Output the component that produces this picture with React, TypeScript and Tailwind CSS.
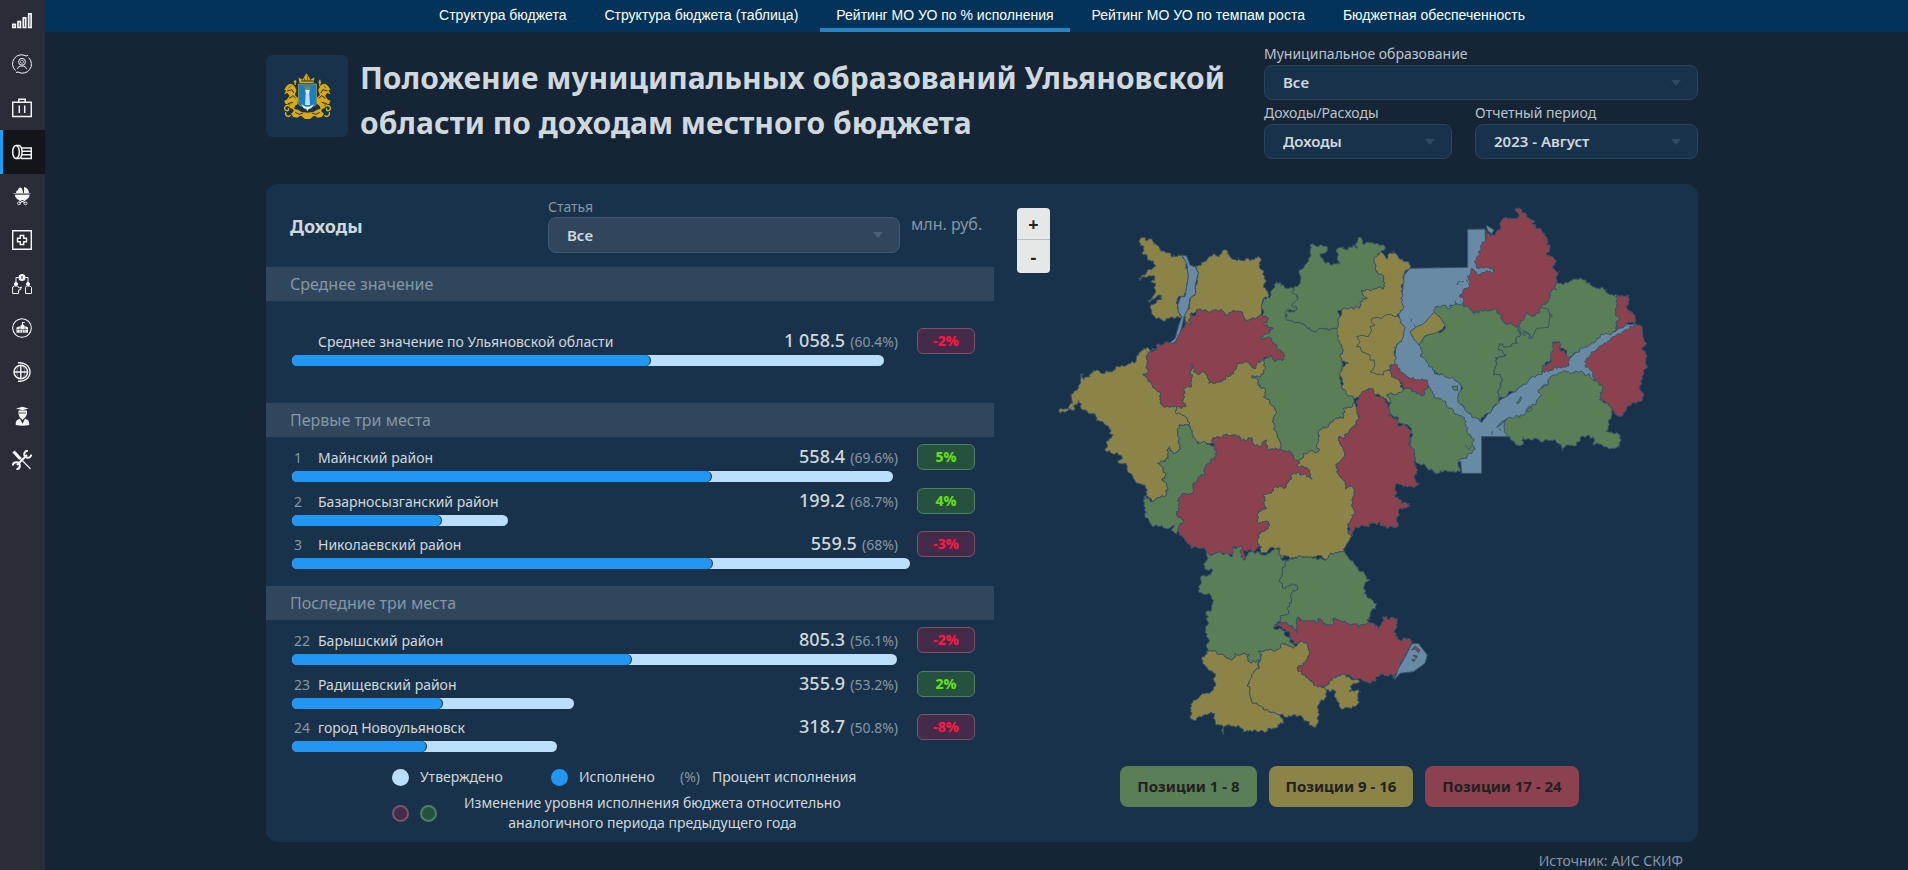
import React from "react";

type Point = [number, number];

type Row = {
  place?: number;
  name: string;
  value: string;
  percent: number;
  total: number;
  change: number;
};

const tabs = [
  "Структура бюджета",
  "Структура бюджета (таблица)",
  "Рейтинг МО УО по % исполнения",
  "Рейтинг МО УО по темпам роста",
  "Бюджетная обеспеченность",
];
const activeTab = 2;

const average: Row = {
  name: "Среднее значение по Ульяновской области",
  value: "1 058.5",
  percent: 60.4,
  total: 95.8,
  change: -2,
};

const firstPlaces: Row[] = [
  { place: 1, name: "Майнский район", value: "558.4", percent: 69.6, total: 97.3, change: 5 },
  { place: 2, name: "Базарносызганский район", value: "199.2", percent: 68.7, total: 35, change: 4 },
  { place: 3, name: "Николаевский район", value: "559.5", percent: 68, total: 100, change: -3 },
];

const lastPlaces: Row[] = [
  { place: 22, name: "Барышский район", value: "805.3", percent: 56.1, total: 97.9, change: -2 },
  { place: 23, name: "Радищевский район", value: "355.9", percent: 53.2, total: 45.6, change: 2 },
  { place: 24, name: "город Новоульяновск", value: "318.7", percent: 50.8, total: 42.8, change: -8 },
];

const GREEN = "#5a7f57";
const OLIVE = "#8b8446";
const RED = "#8b414e";
const WATER = "#688aa5";

// dx/dy move a group of districts, points are "x,y x,y ..."
type District = { fill: string; points: string; dx?: number; dy?: number; smooth?: boolean };

const E = { dx: 930, dy: 0 };
const S = { dx: 120, dy: 810 };

const districts: District[] = [
  // west
  { fill: OLIVE, points: "387,155 402,142 415,148 440,165 484,200 515,195 527,205 533,240 535,270 530,300 525,320 512,320 503,350 508,370 518,383 435,383 425,365 423,345 440,338 455,328 448,322 455,318 435,325 410,330 437,305 437,280 422,275 435,270 435,262 425,258 390,272 387,265 437,228 430,212 395,190 402,170" },
  { fill: OLIVE, points: "555,228 575,215 600,198 635,192 640,180 652,182 658,197 682,212 685,203 690,210 705,212 712,205 720,212 735,203 752,205 758,240 777,318 757,330 757,375 720,388 705,390 685,362 645,378 632,358 600,366 570,356 560,368 540,372 545,400 525,390 523,375 537,350 540,325 555,308 555,290 565,248" },
  { fill: WATER, smooth: true, points: "515,195 530,198 540,225 555,230 565,248 555,290 557,310 540,325 535,355 522,380 517,405 508,440 495,458 475,462 495,445 505,410 515,380 505,365 503,345 512,320 525,320 530,290 535,260 530,220" },
  { fill: OLIVE, points: "440,475 400,475 380,500 378,515 335,525 300,545 270,548 260,540 240,560 222,570 215,562 222,552 212,552 212,580 183,612 187,640 178,655 145,660 150,670 175,660 195,655 190,648 205,632 213,655 255,672 270,695 297,710 297,730 310,735 298,745 290,785 322,788 335,798 325,820 350,822 360,850 375,872 400,885 415,920 427,935 470,910 470,880 455,870 468,855 442,820 475,805 478,770 490,790 505,785 507,705 533,705 533,688 500,672 495,648 453,643 445,605 415,575 398,553 415,540 410,505 420,485" },
  { fill: OLIVE, points: "545,520 550,545 595,555 597,580 640,568 680,530 705,515 735,537 742,515 762,508 760,552 725,558 745,570 765,595 760,620 780,635 800,670 790,690 800,730 812,762 803,780 775,780 770,750 750,770 735,768 725,742 692,752 688,738 650,732 615,745 607,760 565,755 548,742 545,720 533,705 533,688 500,672 495,648 527,650 520,640 530,590 545,585" },
  { fill: RED, points: "540,372 548,378 570,356 600,366 632,358 645,378 685,362 705,390 720,388 757,375 775,385 760,405 790,415 775,430 752,443 785,445 800,465 822,490 822,508 800,510 780,497 740,520 735,537 705,515 680,530 640,568 597,580 595,555 550,545 545,520 545,585 530,590 520,640 527,650 495,648 453,643 445,605 415,575 398,553 415,540 410,505 420,485 440,480 443,462 475,458 495,460 508,430 523,395 545,400" },
  { fill: GREEN, points: "783,318 790,295 800,275 830,295 852,295 860,320 862,355 830,365 830,390 880,402 918,425 940,415 985,420 990,460 995,515 995,590 1008,610 1040,622 1030,640 1000,655 1000,685 940,710 925,730 925,785 880,790 878,805 865,812 845,790 803,780 812,762 800,730 790,690 800,670 780,635 760,620 765,595 745,570 725,558 760,552 762,508 780,497 800,510 822,508 822,490 800,465 785,445 752,443 775,430 790,415 760,405 775,385 757,375 753,350 760,325" },
  { fill: GREEN, points: "905,162 948,167 950,185 930,190 945,220 990,222 980,185 990,172 1005,178 1035,165 1042,175 1050,142 1056,160 1080,158 1115,165 1125,170 1112,187 1092,215 1095,240 1120,265 1125,280 1120,297 1055,300 1072,325 1050,335 1048,355 995,358 985,370 985,420 940,415 918,425 880,402 830,390 825,368 862,355 845,345 860,330 852,295 872,270 868,240 890,220 900,190" },
  { fill: GREEN, points: "507,705 533,705 545,720 548,742 565,762 615,765 615,800 590,825 585,850 550,880 552,903 505,925 508,950 498,965 523,995 505,1015 500,1032 490,1025 492,1005 465,1015 440,1003 425,1007 405,975 403,918 427,935 470,910 470,880 455,870 468,855 442,820 475,805 478,770 490,790 505,785" },
  // centre
  { fill: OLIVE, points: "1038,640 1030,640 1000,655 1000,685 940,710 925,730 925,785 880,790 878,805 865,812 862,825 898,840 905,868 850,850 820,895 790,895 758,918 770,955 745,965 745,1000 775,995 775,1015 750,1030 742,1055 755,1070 745,1090 810,1075 812,1105 890,1100 950,1108 995,1085 1002,1094 1000,1078 1020,1045 1013,1005 1032,960 1030,890 1007,897 985,840 985,820 1005,790 992,740 1015,730 1048,685" },
  { fill: RED, points: "607,760 615,745 650,732 688,738 692,752 725,742 735,768 750,770 770,750 775,780 803,780 845,790 865,812 862,825 898,840 905,868 850,850 820,895 790,895 758,918 770,955 745,965 745,1000 775,995 775,1015 750,1030 742,1055 755,1070 730,1085 700,1080 703,1108 695,1100 690,1068 668,1070 675,1100 635,1090 588,1092 585,1078 545,1075 505,1025 505,1015 523,995 498,965 508,950 505,925 552,903 550,880 585,850 590,825 615,800 615,765" },
  // east
  { ...E, fill: WATER, smooth: true, points: "270,235 443,232 443,118 495,117 497,150 520,180 530,240 528,350 528,400 345,380 330,500 345,552 380,553 385,548 398,542 400,546 390,555 415,570 424,590 420,620 485,697 505,670 540,630 590,600 635,560 680,535 745,510 780,475 850,430 885,425 905,405 950,402 925,440 850,500 820,545 838,578 800,560 745,560 720,620 600,700 560,740 485,740 485,850 425,850 422,815 415,815 350,700 320,600 270,575 240,555 222,520 228,470 245,440 236,370 247,310 252,255" },
  { ...E, fill: OLIVE, points: "182,185 200,208 220,182 235,203 258,215 270,235 252,255 247,310 238,370 250,440 230,465 228,500 225,520 205,540 215,560 240,575 255,605 232,612 200,615 215,635 212,650 200,630 165,615 155,600 145,597 110,622 78,610 65,590 65,530 85,520 65,515 60,460 50,430 55,385 65,360 118,355 120,335 142,325 125,300 190,297 195,280 190,265 165,240 162,215" },
  { ...E, fill: RED, points: "205,540 225,520 240,548 270,565 300,572 322,570 325,585 310,600 308,618 285,605 255,595 240,575 215,560" },
  { ...E, fill: RED, points: "585,60 602,57 620,80 645,95 635,100 675,130 680,165 692,170 680,188 702,205 698,235 718,245 710,275 710,300 695,305 685,330 640,378 620,368 597,412 560,403 528,355 485,362 465,368 430,350 432,330 418,320 448,290 442,260 455,235 472,255 500,242 525,242 505,232 470,235 462,215 478,182 495,155 497,120 512,138 540,120 543,95 560,82 585,85 598,75" },
  { ...E, fill: GREEN, points: "345,355 380,352 400,346 430,350 465,368 485,362 528,355 560,403 597,412 600,430 587,445 593,460 565,470 540,460 540,480 560,495 525,503 520,555 542,560 535,630 505,670 485,697 465,683 445,670 418,640 412,625 424,600 418,580 395,562 345,552 302,500 297,465 310,437 360,430 375,405 345,367" },
  { ...E, fill: OLIVE, smooth: true, points: "342,367 360,382 375,405 368,418 345,430 315,437 297,465 280,445 270,425 290,410 310,402" },
  { ...E, fill: GREEN, points: "710,275 760,267 790,270 825,292 860,297 865,312 888,312 892,340 887,360 897,390 885,425 845,432 830,445 780,475 745,510 735,480 715,455 700,455 700,485 680,515 665,545 635,560 590,600 535,630 542,560 520,555 525,503 560,495 540,480 540,460 565,470 593,460 587,445 600,430 597,412 620,368 640,378 685,330 695,305 710,300" },
  { ...E, fill: RED, points: "700,458 717,453 718,475 735,485 745,515 740,528 700,530 685,545 665,547 668,525 692,510 700,480" },
  { ...E, fill: RED, points: "892,315 925,315 928,370 945,375 943,402 920,402 885,415 897,390 887,360 892,340" },
  { ...E, fill: RED, points: "960,405 980,460 970,470 978,510 965,560 970,610 960,635 925,645 905,678 880,660 838,630 850,590 835,578 820,548 795,530 793,515 820,485 850,465 885,440 915,420 930,408" },
  { ...E, fill: GREEN, points: "690,565 700,555 745,545 780,545 835,578 850,590 838,630 875,655 857,725 900,735 900,773 820,765 818,742 805,735 780,745 770,765 745,765 727,783 722,762 655,748 610,740 605,765 585,762 570,740 560,735 555,690 590,675 600,682 620,665 635,645 655,625 665,615 655,600 665,590 680,585" },
  { ...E, fill: GREEN, points: "325,585 350,625 400,665 432,690 440,720 458,745 462,770 445,790 440,805 415,815 425,842 360,840 355,850 325,840 285,808 272,770 275,715 265,705 232,700 230,680 205,675 205,655 215,640 200,615 232,612 255,595 285,605 308,618 310,600" },
  { ...E, fill: RED, points: "110,630 120,615 150,597 165,615 190,620 200,640 205,678 230,685 232,705 265,705 275,730 272,770 285,810 292,840 285,865 298,880 250,890 225,885 225,920 245,940 270,948 240,955 235,1005 200,1015 180,995 150,1000 105,1010 98,1038 83,1005 102,960 100,890 77,897 55,840 55,820 75,790 62,740 85,730 118,685" },
  // south
  { ...S, fill: GREEN, points: "468,282 515,280 548,288 550,262 575,258 580,300 610,275 625,275 640,285 690,265 692,295 718,297 705,310 695,350 700,385 735,375 740,390 725,400 718,440 705,468 690,470 685,485 672,500 700,510 730,550 730,565 705,552 680,568 630,570 628,600 605,610 590,590 600,582 552,582 545,600 500,580 470,575 475,470 465,457 480,455 488,430 478,400 447,398 452,350 475,345 483,325 463,325" },
  { ...S, fill: GREEN, points: "718,297 770,290 820,298 830,298 875,275 912,310 960,358 942,380 943,400 980,430 950,480 958,490 925,505 915,492 850,475 848,495 830,495 805,475 800,490 748,472 742,520 712,492 685,485 690,470 705,468 718,440 725,400 740,390 735,375 700,385 695,350 705,310" },
  { ...S, fill: OLIVE, points: "458,590 470,575 500,580 545,600 552,582 600,582 590,590 605,610 628,600 628,625 610,640 610,660 597,665 605,725 640,742 690,765 700,790 670,805 600,810 580,815 565,795 525,798 522,825 518,798 500,795 495,760 430,780 423,750 430,720 478,700 490,690 490,638 478,632" },
  { ...S, fill: OLIVE, points: "630,570 680,568 705,552 730,565 750,545 770,545 780,585 742,625 810,678 830,690 825,715 805,735 805,780 790,800 760,780 690,765 640,742 605,725 597,665 610,640 628,625" },
  { ...S, fill: OLIVE, points: "810,678 880,642 930,665 905,675 897,692 933,695 920,735 875,748 862,725 858,698 830,690" },
  { ...S, fill: RED, points: "672,497 690,487 712,492 742,520 748,472 760,485 800,490 805,475 830,495 848,495 850,475 915,492 925,505 970,490 988,510 998,470 1042,475 1032,515 1042,540 1075,535 1085,550 1065,590 1033,658 1000,640 975,665 930,655 880,642 810,678 790,668 742,625 780,585 770,545 750,545 730,550 715,515 695,500" },
  { ...S, fill: WATER, smooth: true, points: "1085,552 1105,550 1132,585 1125,610 1090,635 1050,640 1035,658 1045,625 1065,592" },
  { ...S, fill: RED, smooth: true, points: "1085,570 1095,558 1110,570 1105,578 1096,567" },
  { ...S, fill: RED, smooth: true, points: "1090,585 1102,588 1098,596" },
  { ...S, fill: RED, smooth: true, points: "1085,598 1096,600 1090,605" },
  // islands and bays of the reservoir
  { ...E, fill: WATER, smooth: true, points: "498,105 522,120 515,132 503,122" },
  { ...E, fill: GREEN, smooth: true, points: "396,590 412,588 413,601 402,600" },
  { ...E, fill: GREEN, smooth: true, points: "590,640 603,620 604,628 594,641" },
  { ...E, fill: GREEN, smooth: true, points: "530,712 545,695 560,690 545,703" },
];

const innerBorders = [
  "238,378 225,380 210,373 195,375 185,385 172,382 155,385 153,395 165,405 150,410 155,420 145,440 125,436 110,440 120,455 110,470 120,470 125,485 150,495 150,510 162,510 165,525 158,540 150,545 170,552 190,555 190,545 205,540",
  "600,412 600,432 620,425 635,445 650,415 685,412 690,378 685,358 665,352",
];

const parse = (points: string): Point[] =>
  points.split(" ").map((p) => p.split(",").map(Number) as Point);

// Same edge gives the same bend from both sides, so neighbours stay joined
const bend = (a: Point, b: Point) => {
  const n = Math.sin((a[0] + b[0]) * 12.9898 + (a[1] + b[1]) * 78.233) * 43758.5453;
  return (n - Math.floor(n) - 0.5) * 0.85;
};

const split = (a: Point, b: Point, depth: number): Point[] => {
  const dx = b[0] - a[0];
  const dy = b[1] - a[1];
  if (depth === 0 || Math.hypot(dx, dy) < 8) return [a];
  const flip = a[0] < b[0] || (a[0] === b[0] && a[1] < b[1]) ? 1 : -1;
  const limit = Math.min(1, 14 / Math.hypot(dx, dy));
  const k = bend(a, b) * flip * limit;
  const mid: Point = [(a[0] + b[0]) / 2 - dy * k, (a[1] + b[1]) / 2 + dx * k];
  return [...split(a, mid, depth - 1), ...split(mid, b, depth - 1)];
};

const outline = (d: District) => {
  const pts = parse(d.points).map(([x, y]): Point => [x + (d.dx ?? 0), y + (d.dy ?? 0)]);
  const full = d.smooth ? pts : pts.flatMap((p, i) => split(p, pts[(i + 1) % pts.length], 4));
  return full.map(([x, y]) => `${x.toFixed(1)},${y.toFixed(1)}`).join(" ");
};

const RegionMap = () => (
  <svg
    viewBox="129 39 1800 1611"
    className="block w-full max-w-[600px]"
    role="img"
    aria-label="Карта Ульяновской области"
    stroke="#38536a"
    strokeWidth="3"
    strokeLinejoin="round"
  >
    {districts.map((d, i) => (
      <polygon key={i} fill={d.fill} points={outline(d)} />
    ))}
    {innerBorders.map((points) => (
      <polyline key={points} fill="none" points={points} transform="translate(930 0)" />
    ))}
    <g transform="translate(930 0)" fill="none">
      <path d="M413 285v-8l8-3M425 277l6-3M440 268l2 8M274 386v8M282 404l3 6M385 350l10-6M405 332l4 12M515 735l3-12M538 715l4 8M690 372c8 0 8 10 2 10s-6-8 2-8" />
      <path d="M605 425c8-10 14 2 8 6s-2 10 6 2 14 0 8 8 6 6 10 0" />
      <path d="M618 665c0-16 14-10 8-16 10 0 14 10 2 16zM665 595c6 6 4-14 14-10s4-10 6-12" />
      <path d="M480 362l-4 8-10-6-4 10M435 765l12 14 8-12" />
    </g>
  </svg>
);

const Emblem = () => (
  <svg viewBox="0 0 146 138" className="w-[49px] h-[46px]" aria-label="Герб Ульяновской области" role="img">
    <g fill="#d9a90d">
      <path d="M49 30l-3-17 12 7 6-10 3-5 3-4 3 4 3 5 6 10 12-7-3 17z" />
      <path d="M40 52c-3-9-8-17-16-20-8 0-14 5-17 12l-4 6 6 2-6 12 10-4 6 8-8 12-8 3 4 10 14 2-2 10 13 4 4-11 7-4 2-18-10-10z" />
      <path d="M105 52c3-9 8-17 16-20 8 0 14 5 17 12l4 6-6 2 6 12-10-4-6 8 8 12 8 3-4 10-14 2 2 10-13 4-4-11-7-4-2-18 10-10z" />
      <path d="M28 106l16 4 10 6 19 3 19-3 10-6 16-4-4 8 8 8-6 10-12 2-10-6-12 6-9 2-9-2-12-6-10 6-12-2-6-10 8-8z" />
    </g>
    <g fill="none" stroke="#d9b414" strokeWidth="4">
      <path d="M36 36V22M32 26h8M110 40V20M106 28h8" />
      <path d="M20 100C6 92 0 108 8 112s10-4 6-6M126 100c14-8 20 8 12 12s-10-4-6-6" />
      <path d="M8 118c-4 12 10 16 14 8M138 118c4 12-10 16-14 8M60 130l6 6h14l6-6" />
    </g>
    <g fill="none" stroke="#1d3248" strokeWidth="3">
      <path d="M12 54l14-4 6 10M18 76l12-8 8 8M14 92l16-4M133 54l-14-4-6 10M127 76l-12-8-8 8M131 92l-16-4" />
      <path d="M36 118l12 6 12-4M110 118l-12 6-12-4M54 24h38" />
      <path d="M62 14l4 10M84 14l-4 10M73 8v14M24 38l-8 8M122 38l8 8" strokeWidth="2" />
    </g>
    <path d="M46 33h54v56c0 8-7 11-14 12l-13 5-13-5c-7-1-14-4-14-12z" fill="#0f7fd0" stroke="#c9a31c" strokeWidth="2" />
    <path d="M66 50h14l-1 6h-1l2 40h-14l2-40h-1z" fill="#e9eef0" />
    <path d="M71 60v34M75 60v34" stroke="#a7bac8" strokeWidth="2" />
    <path d="M64 48l-2-9 7 3 4-5 4 5 7-3-2 9z" fill="#9a7a2e" />
    <path d="M54 94l14 7h10l14-7-8 12-7 2-4 6-4-6-7-2z" fill="#f2f4f4" />
  </svg>
);

const icons = [
  {
    title: "Показатели",
    art: <path d="M.9 14.4h2.400v3.100H.9zM6 11.500h2.400v6H6zM11.300 7.900h2.400v9.600h-2.400zM16.700 3.900h2.400v13.600h-2.400z" strokeWidth="1.700" />,
  },
  {
    title: "Население",
    art: (
      <g strokeWidth="1">
        <path d="M3.500 16.500A9 9 0 0 1 14 2M16.600 3.600A9 9 0 0 1 6 18M14 2l2-.6M6 18l-2 .5" />
        <circle cx="10" cy="7.800" r="3.400" />
        <circle cx="10" cy="7.800" r="1.600" opacity=".6" />
        <path d="M5.500 15c.6-2.400 2-3 4.500-3s3.900.6 4.500 3" />
      </g>
    ),
  },
  {
    title: "Экономика",
    art: <path d="M.7 4.200h18.600v14.400H.7zM6.800 4V1.200h6.400V4M7.300 7.500v7.500M12.700 7.500v7.500" strokeWidth="1.500" />,
  },
  {
    title: "Бюджет",
    art: (
      <g strokeWidth="1.500">
        <ellipse cx="4" cy="10" rx="3.300" ry="6.500" />
        <path d="M4 3.500h3c2 .5 3 3.500 3 6.500s-1 6-3 6.500H4M9.800 6h9.500v10.500H9M10 9.300h9M10 12.800h9" />
      </g>
    ),
  },
  {
    title: "Демография",
    art: (
      <g>
        <path d="M3 8.700h14.500c0 3.200-2.500 5.300-5.500 5.300H8.500c-3 0-5.500-2.100-5.500-5.300z" fill="currentColor" stroke="none" />
        <path d="M12 7V1c3 .5 4.800 3 5 6zM4 7c0-2 1-2.500 2-3C6.500.500 10 .500 10.500 4c.5 1 .5 2 .5 3z" fill="currentColor" stroke="none" />
        <path d="M1.500 7.700h17" strokeWidth=".9" opacity=".7" />
        <path d="M7 14l6.500 3M13.500 14L7 17" strokeWidth="1" />
        <circle cx="7" cy="17.300" r="1.500" strokeWidth="1" opacity=".8" />
        <circle cx="13.500" cy="17.300" r="1.500" strokeWidth="1" opacity=".8" />
      </g>
    ),
  },
  {
    title: "Здравоохранение",
    art: <path d="M.7.7h18.600v18.600H.7zM8.300 5.500h3.400v2.800h2.800v3.400h-2.800v2.800H8.300v-2.800H5.500V8.300h2.800z" strokeWidth="1.400" />,
  },
  {
    title: "Социальная защита",
    art: (
      <g strokeWidth="1">
        <circle cx="10" cy="3.500" r="3.500" fill="currentColor" stroke="none" />
        <path d="M10 2v3" stroke="#2a2d38" />
        <circle cx="4" cy="10" r="1.600" fill="currentColor" />
        <circle cx="16" cy="10" r="1.600" fill="currentColor" />
        <path d="M4 8V3.500h2.500M16 8V3.500h-2.500M.6 19.500v-6.500l2-1h3l1.500 2 2.500-1-1.500 3H6.500v3.500zM13.500 19.500v-6l1-1.500h3.500l1.500 1.500v6z" />
      </g>
    ),
  },
  {
    title: "Образование",
    art: (
      <g strokeWidth="1.100">
        <circle cx="10" cy="10" r="9.300" />
        <path d="M4.500 14.800V9.500l2.500-1h1.500V7.500L10.500 6l2 1.500v1H14l2 1v5.300z" fill="currentColor" stroke="none" />
        <path d="M10.500 6.500V4.500h2.200" />
        <path d="M5 11.500h10.500M8 9.500v5M13 9.500v5M10.500 12v3" stroke="#2a2d38" strokeWidth=".6" />
      </g>
    ),
  },
  {
    title: "Мир",
    art: (
      <g strokeWidth="1.400">
        <circle cx="8.800" cy="10" r="6.800" />
        <ellipse cx="8.800" cy="10" rx="4" ry="6.800" strokeWidth=".8" opacity=".5" />
        <path d="M8.800 3.500v13M2 10h13.500M6 .8c6-.8 12 3 12 9.200s-6 10-12 9.200" />
      </g>
    ),
  },
  {
    title: "Кадры",
    art: (
      <g fill="currentColor" stroke="none">
        <path d="M4 2.500L10.500.700l6 1.800-6 1.700zM6.500 4.500h8.500v3.500l-1.500 3-3 3-3-3L6.500 8z" />
        <path d="M3.800 19c-.5-4 1.500-5.500 4.200-6.200l2.500 5 2.500-5c2.700.7 4.700 2.200 4.200 6.200-4 1-9 1-13.400 0z" />
        <path d="M7 7h7M5 4.500v3" stroke="#2a2d38" strokeWidth=".8" />
      </g>
    ),
  },
  {
    title: "Инструменты",
    art: (
      <g>
        <path d="M1.500 1.500l7 7.500" strokeWidth="3.200" />
        <path d="M8 8l10.500 11" strokeWidth="1.100" />
        <path d="M15 5L5 15" strokeWidth="2" />
        <path d="M16 .8A3.500 3.500 0 1 0 19.200 4.500M.8 15.500A3.500 3.500 0 1 1 4.500 19.200" strokeWidth="2" />
      </g>
    ),
  },
];

const Sidebar = () => (
  <nav className="w-[45px] shrink-0 bg-[#2a2d38] overflow-hidden">
    <div className="-mt-0.5">
      {icons.map(({ title, art }, i) => (
        <a
          key={title}
          href="#"
          aria-label={title}
          className={
            i === 3
              ? "flex h-11 items-center border-l-[3px] border-[#1b9ff5] bg-[#13151b] pl-[9px] text-gray-100"
              : "flex h-11 items-center pl-3 text-gray-100"
          }
        >
          <svg viewBox="0 0 20 20" className="size-5" fill="none" stroke="currentColor">
            {art}
          </svg>
        </a>
      ))}
    </div>
  </nav>
);

const Arrow = ({ className }: { className: string }) => (
  <svg viewBox="0 0 10 6" className={`pointer-events-none absolute top-1/2 -mt-[3px] right-[17px] w-[10px] h-[6px] ${className}`}>
    <path d="M0 0h10L5 6z" fill="currentColor" />
  </svg>
);

const Filter = ({ id, label, value }: { id: string; label: string; value: string }) => (
  <div>
    <label htmlFor={id} className="block h-6 text-sm leading-[26px] text-[#b9c4cc]">
      {label}
    </label>
    <div className="relative">
      <select
        id={id}
        className="block w-full h-[35px] appearance-none rounded-lg border border-[#2c445b] bg-[#19324b] pl-[18px] text-[15px] font-semibold text-[#cfd8dc]"
      >
        <option>{value}</option>
      </select>
      <Arrow className="text-[#324a61]" />
    </div>
  </div>
);

const SectionTitle = ({ children }: { children: React.ReactNode }) => (
  <h3 className="h-[34px] bg-[#30465d] pl-6 text-base leading-[34px] text-[#8497a5]">{children}</h3>
);

const RatingRow = ({ row }: { row: Row }) => (
  <div className="flex items-start gap-[7px] pl-[26px] pr-[19px]">
    <div className="flex-1">
      <div className="flex h-[27px] items-baseline leading-6">
        <span className="w-[26px] pl-0.5 text-sm leading-6 text-[#8497a5]">{row.place}</span>
        <span className="text-sm leading-6 text-[#cfd8dc]">{row.name}</span>
        <span className="ml-auto text-lg leading-6 font-medium text-[#cfd8dc]">{row.value}</span>
        <span className="ml-[5px] mr-3 text-sm leading-6 text-[#8497a5]">({row.percent}%)</span>
      </div>
      <div className="h-[11px] rounded-full bg-[#bbdefb]" style={{ width: `${row.total}%` }}>
        <div
          className="h-full rounded-full bg-[#2196f3] shadow-[1px_0_0_0_#19324b]"
          style={{ width: `${row.percent}%` }}
        />
      </div>
    </div>
    <div
      className={
        row.change > 0
          ? "w-[58px] h-[26px] rounded-md border border-[#4f8064] bg-[#26513f] text-center text-sm leading-6 font-extrabold text-[#64dd17]"
          : "w-[58px] h-[26px] rounded-md border border-[#7b5468] bg-[#442b49] text-center text-sm leading-6 font-extrabold text-[#ff1744]"
      }
    >
      {row.change}%
    </div>
  </div>
);

const App = () => {
  return (
    <div className="flex min-h-screen bg-[#162535] font-['Noto_Sans','Open_Sans',sans-serif] text-[#cfd8dc]">
      <Sidebar />
      <div className="flex-1 min-w-0">
        <nav className="flex h-8 justify-center gap-1.5 bg-[#003357] pl-[11px] font-['Liberation_Sans',sans-serif] text-sm text-white">
          {tabs.map((tab, i) => (
            <a
              key={tab}
              href="#"
              className={
                i === activeTab
                  ? "h-8 border-b-4 border-[#2584c6] px-4 leading-[30px]"
                  : "h-8 px-4 leading-[30px]"
              }
            >
              {tab}
            </a>
          ))}
        </nav>

        <div className="pl-[11px]">
          <div className="mx-auto max-w-[1432px]">
            <header className="flex h-[152px] items-start">
              <div className="mt-[23px] flex size-[82px] shrink-0 items-center justify-center rounded-md bg-[#19324b]">
                <Emblem />
              </div>
              <h1 className="mt-[23px] ml-3 flex-1 text-[30px] leading-[45px] font-bold">
                Положение муниципальных образований Ульяновской
                <br />
                области по доходам местного бюджета
              </h1>
              <div className="mt-[9px] w-[434px] shrink-0">
                <Filter id="municipality" label="Муниципальное образование" value="Все" />
                <div className="grid grid-cols-[188px_1fr] gap-[23px]">
                  <Filter id="kind" label="Доходы/Расходы" value="Доходы" />
                  <Filter id="period" label="Отчетный период" value="2023 - Август" />
                </div>
              </div>
            </header>

            <main className="flex rounded-xl bg-[#19324b]">
              <section className="w-[728px] shrink-0 pb-[9px]">
                <div className="flex h-[83px] pl-6">
                  <h2 className="w-[258px] pt-[30px] text-lg leading-6 font-bold">Доходы</h2>
                  <div className="w-[352px] pt-3">
                    <label htmlFor="article" className="block text-sm leading-[21px] text-[#8497a5]">
                      Статья
                    </label>
                    <div className="relative">
                      <select
                        id="article"
                        className="block w-full h-9 appearance-none rounded-lg border border-[#41586e] bg-[#30465d] pl-[18px] text-[15px] font-semibold text-[#cfd8dc]"
                      >
                        <option>Все</option>
                      </select>
                      <Arrow className="text-[#4a6076]" />
                    </div>
                  </div>
                  <span className="pl-[11px] pt-7 text-base leading-6 text-[#8497a5]">млн. руб.</span>
                </div>

                <SectionTitle>Среднее значение</SectionTitle>
                <div className="h-[102px] pt-[27px]">
                  <RatingRow row={average} />
                </div>

                <SectionTitle>Первые три места</SectionTitle>
                <div className="grid h-[149px] grid-rows-3 pt-[7px] pb-[11px]">
                  {firstPlaces.map((row) => (
                    <RatingRow key={row.name} row={row} />
                  ))}
                </div>

                <SectionTitle>Последние три места</SectionTitle>
                <div className="grid h-[138px] grid-rows-3 pt-[7px]">
                  {lastPlaces.map((row) => (
                    <RatingRow key={row.name} row={row} />
                  ))}
                </div>

                <div className="pl-[126px] text-sm leading-5">
                  <div className="flex items-center pt-[9px]">
                    <span className="size-[17px] rounded-full bg-[#bbdefb]" />
                    <span className="w-[142px] pl-[11px]">Утверждено</span>
                    <span className="size-[17px] rounded-full bg-[#2196f3]" />
                    <span className="w-[112px] pl-[11px]">Исполнено</span>
                    <span className="w-8 text-[#8497a5]">(%)</span>
                    <span>Процент исполнения</span>
                  </div>
                  <div className="flex items-center pt-1.5">
                    <span className="size-[17px] rounded-full border-2 border-[#7b5468] bg-[#442b49]" />
                    <span className="ml-[11px] size-[17px] rounded-full border-2 border-[#4f8064] bg-[#26513f]" />
                    <p className="ml-[27px] text-center">
                      Изменение уровня исполнения бюджета относительно
                      <br />
                      аналогичного периода предыдущего года
                    </p>
                  </div>
                </div>
              </section>

              <section className="flex-1 min-w-0 pl-[23px] pt-[19px]">
                <div className="flex items-start gap-[3px]">
                  <div className="mt-[5px] flex w-[33px] shrink-0 flex-col divide-y divide-[#b9bfc9] overflow-hidden rounded-sm bg-[#e6e8e7] text-lg font-bold text-[#222]">
                    <button type="button" className="h-8 leading-8">+</button>
                    <button type="button" className="h-[33px] leading-8">-</button>
                  </div>
                  <RegionMap />
                </div>
                <div className="mt-[26px] flex justify-center gap-3 pr-4 text-[15px] font-bold text-[#212121]">
                  <button type="button" className="h-[41px] rounded-lg bg-[#5a7f57] px-[17px]">Позиции 1 - 8</button>
                  <button type="button" className="h-[41px] rounded-lg bg-[#8b8446] px-[17px]">Позиции 9 - 16</button>
                  <button type="button" className="h-[41px] rounded-lg bg-[#8b414e] px-[17px]">Позиции 17 - 24</button>
                </div>
              </section>
            </main>

            <footer className="pt-[9px] pr-[15px] text-right text-sm leading-5 text-[#8497a5]">
              Источник: АИС СКИФ
            </footer>
          </div>
        </div>
      </div>
    </div>
  );
};

export default App;
